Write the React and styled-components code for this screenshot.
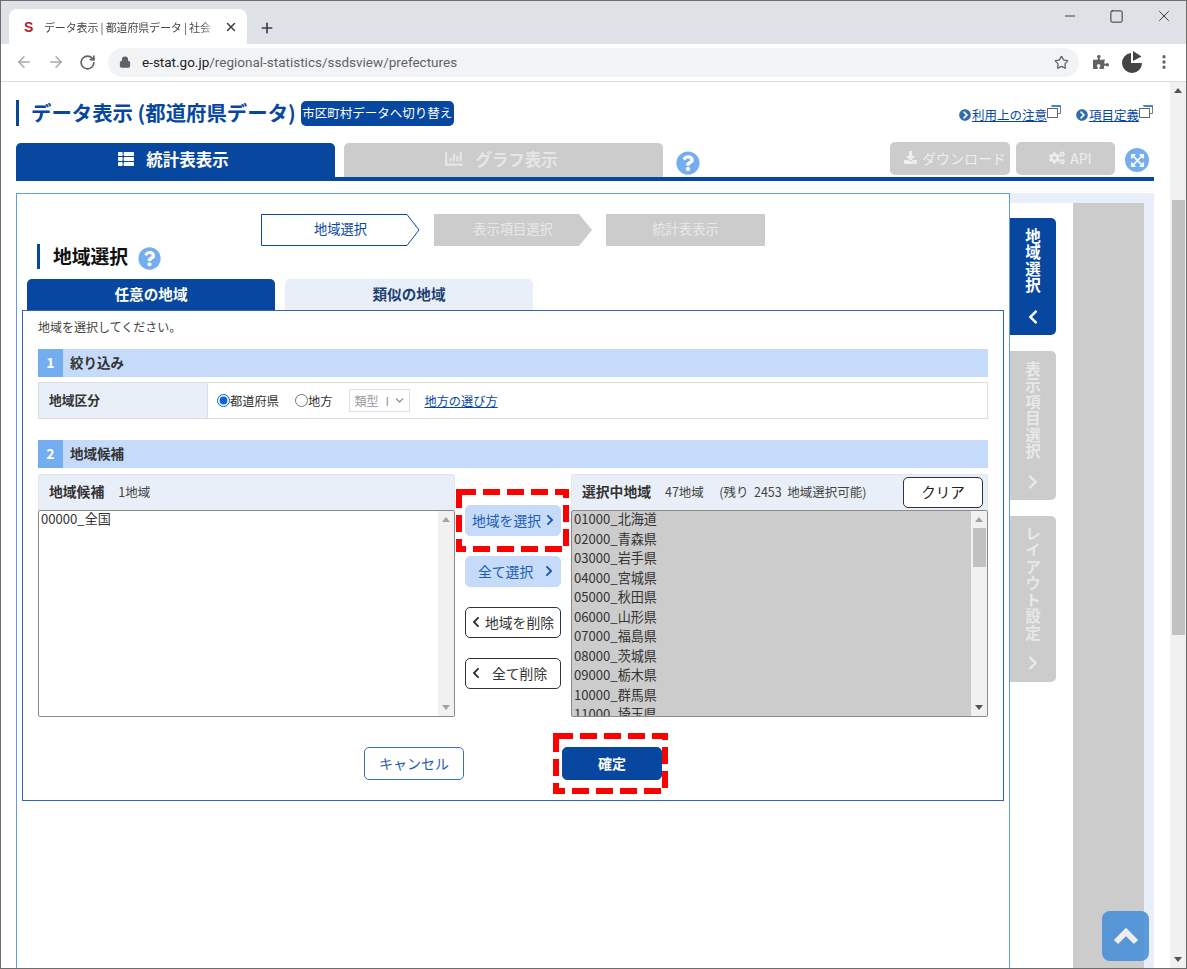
import React from "react";
import styled, { createGlobalStyle } from "styled-components";
import { ArrowLeft, ArrowRight, RotateCw, Lock, Star, Plus, X, Minus, Square, MoreVertical } from "lucide-react";
import {
  FaThList, FaChartBar, FaDownload, FaCogs, FaQuestionCircle, FaExpandArrowsAlt,
  FaChevronLeft, FaChevronRight, FaChevronDown, FaChevronCircleRight, FaPuzzlePiece,
} from "react-icons/fa";

const BLUE = "#07479f";
const PALE = "#e9eff8";
const SKY = "#74adf0";
const BAND = "#c5dbf9";
const FONT = `"Noto Sans CJK JP", "Noto Sans", sans-serif`;

const Global = createGlobalStyle`
  html, body { margin: 0; padding: 0; background: #fff; overflow: hidden; }
  body { font-family: ${FONT}; color: #333; }
  * { box-sizing: border-box; }
`;

const Window = styled.div`
  width: 1187px; height: 969px; border: 1px solid #6d6d6d;
  display: flex; flex-direction: column; overflow: hidden; background: #fff;
`;
const TabStrip = styled.div`
  height: 43px; flex: none; background: #dee1e6; display: flex; align-items: flex-end; padding-left: 8px; position: relative;
`;
const BrowserTab = styled.div`
  width: 238px; height: 35px; background: #fff; border-radius: 8px 8px 0 0; display: flex; align-items: center;
  padding-left: 15px; color: #45484c;
`;
const Favicon = styled.span`
  color: #b5202e; font: 700 14px "Liberation Sans", sans-serif; width: 20px;
`;
const TabTitle = styled.span`
  width: 171px; white-space: nowrap; overflow: hidden; font-size: 11px; letter-spacing: -.15px;
  -webkit-mask-image: linear-gradient(to right, #000 92%, transparent);
  mask-image: linear-gradient(to right, #000 92%, transparent);
`;
const TabClose = styled.span`display: flex; margin-left: 9px; color: #3c4043;`;
const NewTab = styled.span`display: flex; margin-left: 12px; margin-bottom: 8px; color: #3c4043;`;
const WindowButtons = styled.div`
  margin-left: auto; align-self: flex-start; display: flex; align-items: center; gap: 31px; padding: 6px 13px 0 0; color: #333;
`;
const Toolbar = styled.div`
  height: 38px; flex: none; display: flex; align-items: center; padding: 3px 12px 4px 14px; border-bottom: 1px solid #dcdcdc; background: #fff;
`;
const NavIcon = styled.span`
  display: flex; width: 18px; margin-right: ${p => p.$gap}px; color: ${p => p.$dim ? "#a6a9ad" : "#5f6368"};
`;
const Omnibox = styled.div`
  width: 971px; height: 29px; border-radius: 15px; background: #f1f3f4; display: flex; align-items: center; padding-left: 11px; margin-left: 2px;
  font: 13.5px Roboto, sans-serif; color: #5f6368;
`;
const LockIcon = styled.span`display: flex; color: #5f6368; margin-right: 11px;`;
const Host = styled.span`color: #202124;`;
const StarIcon = styled.span`display: flex; margin-left: auto; margin-right: 10px; color: #5f6368;`;
const ExtIcons = styled.div`display: flex; align-items: center; margin-left: 14px; color: #5f6368;`;

const Viewport = styled.div`flex: 1; display: flex; min-height: 0; position: relative;`;
const Page = styled.div`
  flex: 1; min-width: 0; display: flex; flex-direction: column; padding: 18px 16px 0 15px;
`;
const PageScroll = styled.div`
  width: 16px; flex: none; background: #f1f1f1; display: flex; flex-direction: column; align-items: center; padding-top: 6px; position: relative;
`;
const UpTri = styled.i`
  width: 0; height: 0; border: 4px solid transparent; border-top: 0; border-bottom: 5px solid ${p => p.$c || "#555"};
  flex: none;
`;
const DownTri = styled.i`
  width: 0; height: 0; border: 4px solid transparent; border-bottom: 0; border-top: 5px solid ${p => p.$c || "#555"};
  flex: none; margin-top: auto; margin-bottom: 6px;
`;
const PageThumb = styled.div`width: 13px; height: 435px; background: #c1c1c1; margin-top: 107px;`;

const HeadRow = styled.div`display: flex; align-items: center; height: 26px; flex: none;`;
const Title = styled.h1`
  margin: 0; height: 26px; border-left: 3px solid ${BLUE}; padding-left: 12px; font-size: 20.4px; line-height: 24px; font-weight: 700; color: ${BLUE}; white-space: pre;
`;
const SwitchButton = styled.button`
  font-family: inherit; margin-left: 5px; height: 25px; width: 153px; padding: 0 0 2px; background: ${BLUE}; color: #fff; border: 0; border-radius: 5px; font-size: 12.5px; white-space: nowrap;
`;
const HelpLinks = styled.div`margin-left: auto; display: flex; gap: 15px; padding-top: 3px; margin-right: 1px;`;
const HelpLink = styled.a`
  display: flex; align-items: center; font-size: 12.5px; color: ${BLUE}; text-decoration: underline; line-height: 16px;
  > svg:first-child { color: #2f6ea8; margin-right: 1px; }
`;
const PopupIcon = styled.svg`margin: -6px 0 0 0; flex: none;`;

const MainTabs = styled.div`
  display: flex; height: 39px; margin-top: 16px; border-bottom: 4px solid ${BLUE}; flex: none;
`;
const MainTab = styled.div`
  width: 319px; margin-top: 1px; border-radius: 5px 5px 0 0; display: flex; align-items: center; justify-content: center; gap: 12px;
  margin-right: 9px; font-size: 16.5px; font-weight: 700; padding: 0 0 3px 2px;
  background: ${p => p.$active ? BLUE : "#cccccc"}; color: ${p => p.$active ? "#fff" : "#e6e6e6"};
  svg { margin-left: -6px; }
`;
const HelpRound = styled.span`
  display: flex; color: ${SKY}; margin: ${p => p.$m}; background: #fff; border-radius: 50%;
`;
const GreyButton = styled.div`
  width: ${p => p.$w}px; height: 33px; background: #cccccc; color: #eee; border-radius: 5px; display: flex; align-items: center; justify-content: center; gap: 5px;
  font-size: ${p => p.$fs}px; margin-left: ${p => p.$ml}px; padding: 0 0 2px 10px;
`;
const ExpandRound = styled.span`
  width: 24px; height: 24px; margin: 6px 5px 0 10px; border-radius: 50%; background: ${SKY}; color: #fff; display: flex; align-items: center; justify-content: center;
`;

const Body = styled.div`display: flex; flex: 1; min-height: 0; margin-top: 12px;`;
const Panel = styled.div`
  width: 994px; flex: none; border: 1px solid #5f9be6; border-bottom: 0; display: flex; flex-direction: column;
`;
const Steps = styled.div`display: flex; gap: 14px; margin: 20px 0 0 244px; flex: none;`;
const Step = styled.div`
  position: relative; width: ${p => p.$w}px; height: 32px; display: flex; align-items: center; justify-content: center; padding-bottom: 3px;
  font-size: 13.3px; color: ${p => p.$on ? BLUE : "#e8e8e8"};
  background: ${p => p.$on ? "transparent" : "#ccc"};
  clip-path: ${p => p.$arrow ? "polygon(0 0, calc(100% - 13px) 0, 100% 50%, calc(100% - 13px) 100%, 0 100%)" : "none"};
  svg { position: absolute; inset: 0; }
  span { position: relative; }
`;
const Heading = styled.div`
  display: flex; align-items: center; flex: none; height: 25px; margin: -2px 0 0 20px; border-left: 3px solid ${BLUE}; padding: 0 0 3px 13px;
  font-size: 18.8px; font-weight: 700; color: #111;
`;
const SubTabs = styled.div`display: flex; gap: 10px; margin: 10px 0 0 10px; flex: none; position: relative;`;
const SubTab = styled.div`
  width: 248px; height: 31px; border-radius: 5px 5px 0 0; display: flex; align-items: center; justify-content: center; font-size: 14.6px; font-weight: 700; padding-bottom: 3px;
  background: ${p => p.$active ? BLUE : PALE}; color: ${p => p.$active ? "#fff" : "#1c3f73"};
`;
const Box = styled.div`
  width: 982px; height: 491px; margin-left: 5px; border: 1px solid #2f66ad; padding: 7px 15px 0; flex: none; background: #fff;
`;
const Lead = styled.div`font-size: 12px; line-height: 18px; color: #444;`;
const Band = styled.div`
  height: 28px; margin-top: ${p => p.$mt}px; background: ${BAND}; display: flex; align-items: center; font-size: 13.5px; font-weight: 700; color: #333; padding-bottom: 3px;
`;
const BandNo = styled.span`
  width: 25px; height: 28px; margin: 0 7px -3px 0; background: ${SKY}; color: #fff; display: flex; align-items: center; justify-content: center; padding-bottom: 3px; font-size: 14px;
`;
const FilterRow = styled.div`
  margin-top: 5px; height: 37px; border: 1px solid #ddd; display: flex;
`;
const FilterLabel = styled.div`
  width: 169px; background: ${PALE}; border-right: 1px solid #ddd; padding: 0 0 2px 10px; display: flex; align-items: center; font-size: 12.75px; font-weight: 700; color: #333;
`;
const FilterBody = styled.div`display: flex; align-items: center; padding-left: 9px; font-size: 12.25px; color: #333;`;
const RadioLabel = styled.label`
  display: flex; align-items: center; margin-right: 16px;
  input { margin: 0; width: 13px; height: 13px; accent-color: #0b63d8; }
`;
const FakeSelect = styled.div`
  width: 61px; height: 23px; border: 1px solid #d6e0ee; display: flex; align-items: center; justify-content: space-between; padding: 0 5px; color: #999; font-size: 12px; margin-right: 15px;
`;
const TextLink = styled.a`color: ${BLUE}; text-decoration: underline; font-size: 12.2px;`;

const Chooser = styled.div`display: grid; grid-template-columns: 417px 116px 417px; height: 243px; margin-top: 6px;`;
const ListPanel = styled.div`display: flex; flex-direction: column; min-height: 0;`;
const ListHead = styled.div`
  height: 36px; flex: none; background: ${PALE}; border: 1px solid #e3e6ea; border-bottom: 0; border-radius: 3px 3px 0 0; display: flex; align-items: center; padding: 0 0 3px 10px; font-size: 12.5px; color: #444; white-space: pre;
  b { font-size: 13.8px; color: #333; margin-right: 14px; }
`;
const ClearButton = styled.button`
  font-family: inherit; margin: 3px 4px 0 auto; width: 80px; height: 31px; background: #fff; border: 1px solid #333; border-radius: 5px; font-size: 14.5px; color: #222; padding: 0 0 2px;
`;
const ListBody = styled.div`
  flex: 1; min-height: 0; display: flex; border: 1px solid #8a8a8a; border-radius: 2px; background: ${p => p.$bg}; overflow: hidden;
`;
const Items = styled.div`flex: 1; padding-left: 2px; margin-top: -2px;`;
const Item = styled.div`font-size: 13.1px; line-height: 19.5px; height: 19.5px; color: #333; white-space: nowrap;`;
const ListScroll = styled.div`
  width: 16px; flex: none; background: #f1f1f1; display: flex; flex-direction: column; align-items: center; padding-top: 6px;
`;
const ListThumb = styled.div`width: 13px; height: 39px; margin-top: 6px; background: #c1c1c1;`;

const Mover = styled.div`display: flex; flex-direction: column; align-items: center; gap: 20px; padding-top: 31px;`;
const MoveButton = styled.button`
  position: relative; font-family: inherit; width: 96px; height: 31px; flex: none; border-radius: 5px; padding: 0 0 2px ${p => p.$pl}px; display: flex; align-items: center; gap: ${p => p.$gap}px;
  font-size: 13.8px; white-space: nowrap;
  background: ${p => p.$add ? BAND : "#fff"}; border: 1px solid ${p => p.$add ? BAND : "#333"}; color: ${p => p.$add ? "#1b5cb0" : "#333"};
  svg { flex: none; }
`;
const Footer = styled.div`display: flex; margin: 30px 0 0 326px; gap: 98px;`;
const FootButton = styled.button`
  position: relative; font-family: inherit; width: 100px; height: 33px; border-radius: 5px; padding: 0 0 2px; font-size: 14px;
  background: ${p => p.$primary ? BLUE : "#fff"}; color: ${p => p.$primary ? "#fff" : "#2a5ea8"}; font-weight: ${p => p.$primary ? 700 : 400};
  border: 1px solid ${p => p.$primary ? BLUE : "#3a70b8"};
`;
const Mark = styled.svg`
  position: absolute; left: ${p => p.$l}px; top: ${p => p.$t}px; pointer-events: none; z-index: 2; overflow: visible;
`;

const Side = styled.div`flex: 1; min-width: 0; background: ${PALE}; padding: 10px 10px 0 0; display: flex;`;
const SideInner = styled.div`flex: 1; background: #fff; display: flex; gap: 17px;`;
const SideTabs = styled.div`width: 46px; flex: none; display: flex; flex-direction: column; gap: 16px; padding-top: 15px;`;
const SideTab = styled.div`
  height: ${p => p.$h}px; border-radius: 0 5px 5px 0; display: flex; flex-direction: column; align-items: center; padding-top: 10px;
  background: ${p => p.$active ? BLUE : "#ccc"}; color: ${p => p.$active ? "#fff" : "#e8e8e8"};
  svg { margin-top: auto; margin-bottom: ${p => p.$bm}px; }
`;
const SideLabel = styled.span`
  writing-mode: vertical-rl; font-size: 15.5px; font-weight: 700; line-height: 16px; letter-spacing: 1px;
`;
const GreyColumn = styled.div`width: 71px; background: #ccc; flex: none;`;
const ToTop = styled.div`
  position: absolute; right: 37px; bottom: 7px; width: 47px; height: 50px; border-radius: 8px; background: rgba(66,140,215,.85); color: #eee; display: flex; align-items: center; justify-content: center;
`;

const Dash = ({ w, h, l, t }) => (
  <Mark $l={l} $t={t} width={w} height={h}>
    <rect x="3" y="3" width={w - 6} height={h - 6} fill="none" stroke="#f00" strokeWidth="6" strokeDasharray="17 7" />
  </Mark>
);

const Popup = () => (
  <PopupIcon width="14" height="13" viewBox="0 0 14 13">
    <path d="M4.5 .5H13.5V8.5H11" fill="none" stroke="#777" />
    <path d="M4.5 1H13.5" stroke="#3f85d0" strokeWidth="2" />
    <rect x=".5" y="3.5" width="10" height="9" fill="#fff" stroke="#666" />
  </PopupIcon>
);

const selected = ["01000_北海道","02000_青森県","03000_岩手県","04000_宮城県","05000_秋田県","06000_山形県","07000_福島県","08000_茨城県","09000_栃木県","10000_群馬県","11000_埼玉県"];

export default function App() {
  return (
    <Window>
      <Global />
      <TabStrip>
        <BrowserTab>
          <Favicon>S</Favicon>
          <TabTitle>データ表示 | 都道府県データ | 社会・人口統計体系</TabTitle>
          <TabClose><X size={14} strokeWidth={2.5} /></TabClose>
        </BrowserTab>
        <NewTab><Plus size={16} strokeWidth={2.5} /></NewTab>
        <WindowButtons>
          <Minus size={16} strokeWidth={1.4} />
          <Square size={15} strokeWidth={1.6} />
          <X size={18} strokeWidth={1.3} />
        </WindowButtons>
      </TabStrip>
      <Toolbar>
        <NavIcon $dim $gap={14}><ArrowLeft size={18} /></NavIcon>
        <NavIcon $dim $gap={14}><ArrowRight size={18} /></NavIcon>
        <NavIcon $gap={9}><RotateCw size={17} strokeWidth={2.4} /></NavIcon>
        <Omnibox>
          <LockIcon><Lock size={12} fill="#5f6368" strokeWidth={2.5} /></LockIcon>
          <Host>e-stat.go.jp</Host>/regional-statistics/ssdsview/prefectures
          <StarIcon><Star size={15} strokeWidth={2} /></StarIcon>
        </Omnibox>
        <ExtIcons>
          <FaPuzzlePiece size={16} />
          <svg width="24" height="24" viewBox="0 0 24 24" style={{ marginLeft: 11 }}>
            <path d="M11 3 A10 10 0 1 0 22 13 L11 13 Z" fill="#444" />
            <path d="M13 1 L21.5 6.5 L13 11 Z" fill="#444" />
          </svg>
          <MoreVertical size={18} strokeWidth={2.4} style={{ marginLeft: 11 }} />
        </ExtIcons>
      </Toolbar>
      <Viewport>
        <Page>
          <HeadRow>
            <Title>データ表示 (都道府県データ)</Title>
            <SwitchButton>市区町村データへ切り替え</SwitchButton>
            <HelpLinks>
              <HelpLink><FaChevronCircleRight size={12} />利用上の注意<Popup /></HelpLink>
              <HelpLink><FaChevronCircleRight size={12} />項目定義<Popup /></HelpLink>
            </HelpLinks>
          </HeadRow>
          <MainTabs>
            <MainTab $active><FaThList size={16} />統計表表示</MainTab>
            <MainTab><FaChartBar size={18} />グラフ表示</MainTab>
            <HelpRound $m="9px 0 0 4px"><FaQuestionCircle size={24} /></HelpRound>
            <GreyButton $w={120} $ml={190} $fs={14}><FaDownload size={13} />ダウンロード</GreyButton>
            <GreyButton $w={99} $ml={6} $fs={14}><FaCogs size={16} />API</GreyButton>
            <ExpandRound><FaExpandArrowsAlt size={15} /></ExpandRound>
          </MainTabs>
          <Body>
            <Panel>
              <Steps>
                <Step $on $w={159}>
                  <svg width="159" height="32"><path d="M.5 .5H146L158 16L146 31.5H.5Z" fill="#fff" stroke={BLUE} /></svg>
                  <span>地域選択</span>
                </Step>
                <Step $arrow $w={158}><span>表示項目選択</span></Step>
                <Step $w={159}><span>統計表表示</span></Step>
              </Steps>
              <Heading>地域選択<HelpRound $m="6px 0 0 10px"><FaQuestionCircle size={23} /></HelpRound></Heading>
              <SubTabs>
                <SubTab $active>任意の地域</SubTab>
                <SubTab>類似の地域</SubTab>
              </SubTabs>
              <Box>
                <Lead>地域を選択してください。</Lead>
                <Band $mt={13}><BandNo>1</BandNo>絞り込み</Band>
                <FilterRow>
                  <FilterLabel>地域区分</FilterLabel>
                  <FilterBody>
                    <RadioLabel><input type="radio" name="area" defaultChecked />都道府県</RadioLabel>
                    <RadioLabel><input type="radio" name="area" />地方</RadioLabel>
                    <FakeSelect>類型 Ⅰ<FaChevronDown size={9} /></FakeSelect>
                    <TextLink>地方の選び方</TextLink>
                  </FilterBody>
                </FilterRow>
                <Band $mt={21}><BandNo>2</BandNo>地域候補</Band>
                <Chooser>
                  <ListPanel>
                    <ListHead><b>地域候補</b>1地域</ListHead>
                    <ListBody $bg="#fff">
                      <Items><Item>00000_全国</Item></Items>
                      <ListScroll>
                        <UpTri $c="#a3a3a3" />
                        <DownTri $c="#a3a3a3" />
                      </ListScroll>
                    </ListBody>
                  </ListPanel>
                  <Mover>
                    <MoveButton $add $pl={6} $gap={3}>
                      地域を選択<FaChevronRight size={12} />
                      <Dash w={113} h={63} l={-10} t={-17} />
                    </MoveButton>
                    <MoveButton $add $pl={12} $gap={10}>全て選択<FaChevronRight size={12} /></MoveButton>
                    <MoveButton $pl={4} $gap={3}><FaChevronLeft size={12} />地域を削除</MoveButton>
                    <MoveButton $pl={4} $gap={10}><FaChevronLeft size={12} />全て削除</MoveButton>
                  </Mover>
                  <ListPanel>
                    <ListHead>
                      <b>選択中地域</b>47地域　 (残り  2453  地域選択可能)
                      <ClearButton>クリア</ClearButton>
                    </ListHead>
                    <ListBody $bg="#cccccc">
                      <Items>{selected.map(s => <Item key={s}>{s}</Item>)}</Items>
                      <ListScroll>
                        <UpTri $c="#a3a3a3" />
                        <ListThumb />
                        <DownTri />
                      </ListScroll>
                    </ListBody>
                  </ListPanel>
                </Chooser>
                <Footer>
                  <FootButton>キャンセル</FootButton>
                  <FootButton $primary>
                    確定
                    <Dash w={115} h={61} l={-10} t={-15} />
                  </FootButton>
                </Footer>
              </Box>
            </Panel>
            <Side>
              <SideInner>
                <SideTabs>
                  <SideTab $active $h={117} $bm={10}><SideLabel>地域選択</SideLabel><FaChevronLeft size={16} /></SideTab>
                  <SideTab $h={149} $bm={10}><SideLabel>表示項目選択</SideLabel><FaChevronRight size={16} /></SideTab>
                  <SideTab $h={166} $bm={11}><SideLabel>レイアウト設定</SideLabel><FaChevronRight size={16} /></SideTab>
                </SideTabs>
                <GreyColumn />
              </SideInner>
            </Side>
          </Body>
        </Page>
        <PageScroll>
          <UpTri />
          <PageThumb />
          <DownTri />
        </PageScroll>
        <ToTop>
          <svg width="26" height="20" viewBox="0 0 26 20"><path d="M3 16 L13 6 L23 16" fill="none" stroke="currentColor" strokeWidth="6" /></svg>
        </ToTop>
      </Viewport>
    </Window>
  );
}
